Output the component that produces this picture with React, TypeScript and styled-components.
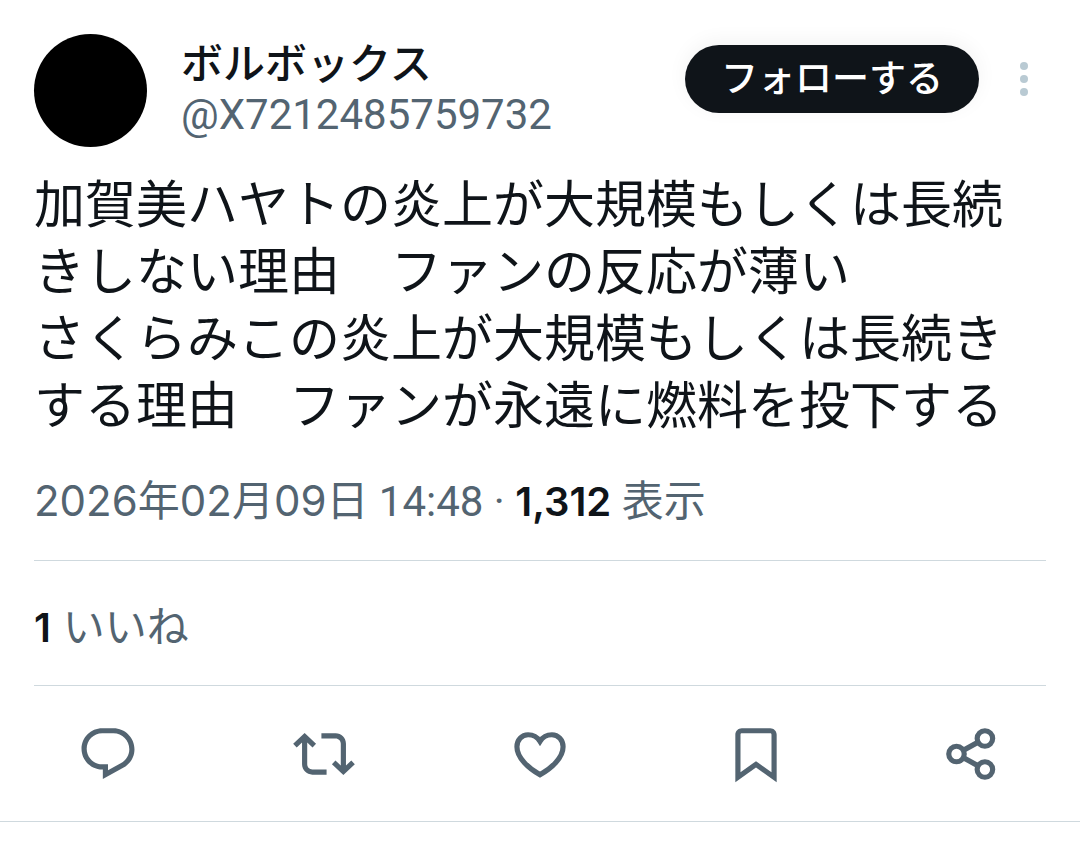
import React from "react";
import styled, { createGlobalStyle } from "styled-components";

const ink = "#0f1419";
const muted = "#536471";
const line = "#cfd9de";
const sans = `Inter, "Noto Sans CJK JP", sans-serif`;
const narrowSans = `Roboto, "Noto Sans CJK JP", sans-serif`;

const GlobalStyle = createGlobalStyle`
  *, *::before, *::after { box-sizing: border-box; }
  body {
    margin: 0;
    background: #ffffff;
    color: ${ink};
    font-family: ${sans};
  }
`;

const Post = styled.article`
  width: 100%;
  border-bottom: 1px solid ${line};
`;

const Content = styled.div`
  padding: 34px 34px 0;
`;

const Header = styled.header`
  display: flex;
  align-items: flex-start;
`;

const Avatar = styled.div`
  flex: none;
  width: 113px;
  height: 113px;
  border-radius: 50%;
  background: #000000;
`;

const Author = styled.div`
  flex: 1;
  min-width: 0;
  margin-left: 34px;
  padding-top: 5px;
`;

const Name = styled.h1`
  margin: 0;
  font-size: 42px;
  line-height: 50px;
  font-weight: 500;
  white-space: nowrap;
`;

const Handle = styled.a`
  display: block;
  color: ${muted};
  font-family: ${narrowSans};
  font-size: 42px;
  line-height: 52px;
  text-decoration: none;
`;

const FollowButton = styled.button`
  flex: none;
  height: 68px;
  margin-top: 11px;
  padding: 0 36px;
  border: 0;
  border-radius: 34px;
  background: ${ink};
  box-shadow: 0 -4px 20px rgba(0, 0, 0, 0.05);
  color: #ffffff;
  font-family: inherit;
  font-size: 37px;
  line-height: 68px;
  font-weight: 500;
  white-space: nowrap;
`;

const MoreButton = styled.button`
  flex: none;
  display: flex;
  margin: 23px 11px 0 34px;
  padding: 0;
  border: 0;
  background: none;
  color: #b9cad3;
`;

const Body = styled.p`
  margin: 24px 0 0;
  font-size: 51px;
  line-height: 67px;
  white-space: pre-line;
`;

const Meta = styled.p`
  margin: 0;
  padding: 32px 0 28px;
  border-bottom: 1px solid ${line};
  color: ${muted};
  font-family: ${narrowSans};
  font-size: 42px;
  line-height: 60px;
`;

const Likes = styled(Meta)`
  padding: 36px 0 28px;
  font-family: ${sans};
`;

const DateText = styled.span`
  font-family: ${sans};
`;

const Count = styled.strong`
  color: ${ink};
  font-family: ${sans};
  font-size: 40px;
  line-height: 1;
  font-weight: 600;
`;

const Actions = styled.div`
  display: grid;
  grid-template-columns: repeat(5, 1fr);
  padding: 37px 0 36px;
`;

const Action = styled.button`
  display: flex;
  justify-content: center;
  padding: 0;
  border: 0;
  background: none;
  color: ${muted};
`;

const Glyph = styled.svg`
  display: block;
  width: 62px;
  height: 62px;
  fill: currentColor;
`;

const text =
  "加賀美ハヤトの炎上が大規模もしくは長続きしない理由　ファンの反応が薄い\nさくらみこの炎上が大規模もしくは長続きする理由　ファンが永遠に燃料を投下する";

const actions = [
  {
    label: "返信",
    shape: (
      <path d="M1.751 10c0-4.42 3.584-8 8.005-8h4.366c4.49 0 8.129 3.64 8.129 8.13 0 2.96-1.607 5.68-4.196 7.11l-8.054 4.46v-3.69h-.067c-4.49.1-8.183-3.51-8.183-8.01zm8.005-6c-3.317 0-6.005 2.69-6.005 6 0 3.37 2.77 6.08 6.138 6.01l.351-.01h1.761v2.3l5.087-2.81c1.951-1.08 3.163-3.13 3.163-5.36 0-3.39-2.744-6.13-6.129-6.13H9.756z" />
    ),
  },
  {
    label: "リポスト",
    shape: (
      <path d="M4.5 3.88l4.432 4.14-1.364 1.46L5.5 7.55V16c0 1.1.896 2 2 2H13v2H7.5c-2.209 0-4-1.79-4-4V7.55L1.432 9.48.068 8.02 4.5 3.88zM16.5 6H11V4h5.5c2.209 0 4 1.79 4 4v8.45l2.068-1.93 1.364 1.46-4.432 4.14-4.432-4.14 1.364-1.46 2.068 1.93V8c0-1.1-.896-2-2-2z" />
    ),
  },
  {
    label: "いいね",
    shape: (
      <path
        d="M12 7.1C11 5.5 9.3 4.55 7.4 4.55 4.9 4.55 3.07 6.6 3.07 9.2c0 4.3 4.5 8.3 8.93 10.85 4.43-2.55 8.93-6.55 8.93-10.85 0-2.6-1.83-4.65-4.33-4.65-1.9 0-3.6.95-4.6 2.55z"
        fill="none"
        stroke="currentColor"
        strokeWidth="2"
      />
    ),
  },
  {
    label: "ブックマーク",
    shape: (
      <path d="M4 4.5C4 3.12 5.119 2 6.5 2h11C18.881 2 20 3.12 20 4.5v18.44l-8-5.71-8 5.71V4.5zM6.5 4c-.276 0-.5.22-.5.5v14.56l6-4.29 6 4.29V4.5c0-.28-.224-.5-.5-.5h-11z" />
    ),
  },
  {
    label: "共有",
    shape: (
      <g fill="none" stroke="currentColor" strokeWidth="2">
        <circle cx="6" cy="12" r="3" />
        <circle cx="17" cy="6" r="3" />
        <circle cx="17" cy="18" r="3" />
        <path d="M8.6 10.6l5.8-3.2M8.6 13.4l5.8 3.2" />
      </g>
    ),
  },
];

export default function App() {
  return (
    <>
      <GlobalStyle />
      <Post>
        <Content>
          <Header>
            <Avatar />
            <Author>
              <Name lang="ja">ボルボックス</Name>
              <Handle href="#profile">@X7212485759732</Handle>
            </Author>
            <FollowButton type="button">フォローする</FollowButton>
            <MoreButton type="button" aria-label="もっと見る">
              <svg width="22" height="44" viewBox="0 0 22 44" fill="currentColor">
                <circle cx="11" cy="9" r="4" />
                <circle cx="11" cy="22" r="4" />
                <circle cx="11" cy="35" r="4" />
              </svg>
            </MoreButton>
          </Header>
          <Body lang="ja">{text}</Body>
          <Meta>
            <DateText>2026年02月09日</DateText> 14:48 · <Count>1,312</Count> 表示
          </Meta>
          <Likes>
            <Count>1</Count> いいね
          </Likes>
        </Content>
        <Actions>
          {actions.map((a) => (
            <Action key={a.label} type="button" aria-label={a.label}>
              <Glyph viewBox="0 0 24 24" aria-hidden="true">
                {a.shape}
              </Glyph>
            </Action>
          ))}
        </Actions>
      </Post>
    </>
  );
}
